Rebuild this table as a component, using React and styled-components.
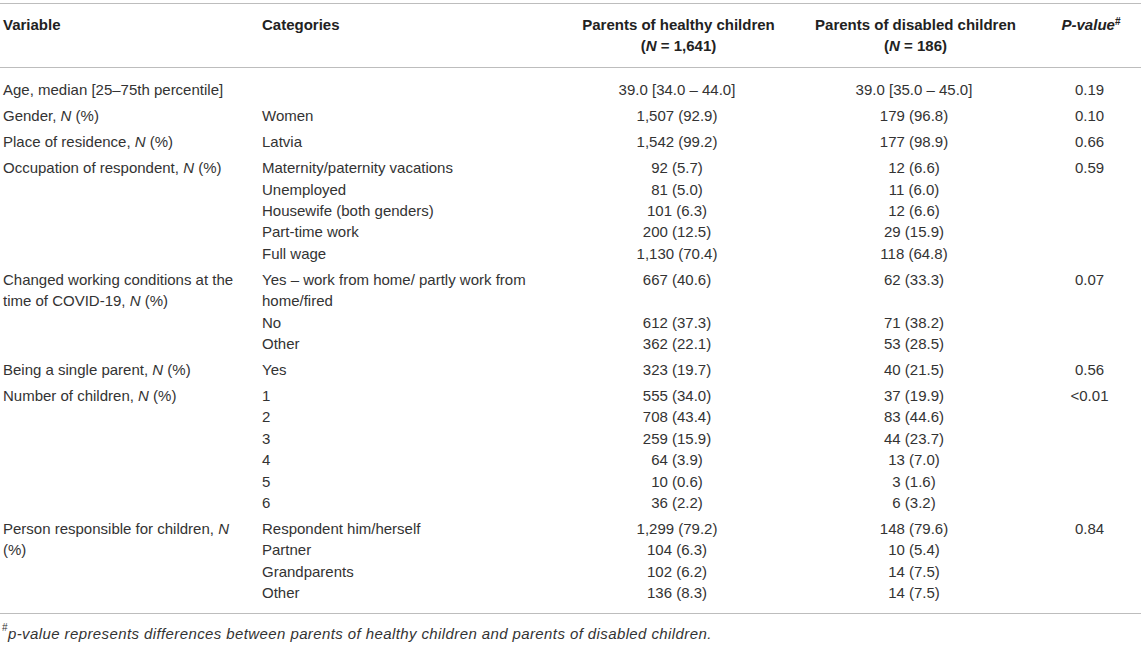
import React from 'react';
import styled, { createGlobalStyle } from 'styled-components';

const GlobalStyle = createGlobalStyle`
    body {
        margin: 0;
        background: #FFFFFF;
        font-family: 'Liberation Sans', Arial, Helvetica, sans-serif;
        color: #333333;
    }
`;

const Page = styled.div`
    width: 1141px;
    padding-top: 3px;
`;

const Table = styled.table`
    width: 1141px;
    border-collapse: collapse;
    table-layout: fixed;
    font-size: 15px;
    line-height: 21.4px;
`;

const Col = styled.col`
    width: ${p => p.$w}px;
`;

const HeadRow = styled.tr`
    border-top: 1px solid #BDBDBD;
    border-bottom: 1px solid #BDBDBD;
`;

const HeadCell = styled.th`
    font-weight: 700;
    color: #222222;
    text-align: ${p => (p.$center ? 'center' : 'left')};
    vertical-align: top;
    padding: 10px ${p => (p.$center ? '0' : '3px')} 10px 3px;
`;

const Cell = styled.td`
    text-align: ${p => (p.$center ? 'center' : 'left')};
    vertical-align: top;
    padding-left: ${p => (p.$center ? '0' : '3px')};
    padding-right: ${p => (p.$center ? '0' : '10px')};
    padding-top: ${p => p.$top}px;
    padding-bottom: ${p => p.$bottom}px;
`;

const BodyEnd = styled.tr`
    border-bottom: 1px solid #BDBDBD;
`;

const Sup = styled.sup`
    font-size: 10px;
    font-style: normal;
    vertical-align: top;
    position: relative;
    top: -3px;
`;

const Footnote = styled.p`
    margin: 0;
    padding: 11px 0 0 2px;
    font-size: 15px;
    letter-spacing: 0.4px;
    font-style: italic;
    color: #333333;
`;

const groups = [
    { v: <>Age, median [25–75th percentile]</>, p: '0.19', rows: [['', '39.0 [34.0 – 44.0]', '39.0 [35.0 – 45.0]']] },
    { v: <>Gender, <i>N</i> (%)</>, p: '0.10', rows: [['Women', '1,507 (92.9)', '179 (96.8)']] },
    { v: <>Place of residence, <i>N</i> (%)</>, p: '0.66', rows: [['Latvia', '1,542 (99.2)', '177 (98.9)']] },
    {
        v: <>Occupation of respondent, <i>N</i> (%)</>, p: '0.59', rows: [
            ['Maternity/paternity vacations', '92 (5.7)', '12 (6.6)'],
            ['Unemployed', '81 (5.0)', '11 (6.0)'],
            ['Housewife (both genders)', '101 (6.3)', '12 (6.6)'],
            ['Part-time work', '200 (12.5)', '29 (15.9)'],
            ['Full wage', '1,130 (70.4)', '118 (64.8)'],
        ]
    },
    {
        v: <>Changed working conditions at the time of COVID-19, <i>N</i> (%)</>, p: '0.07', rows: [
            ['Yes – work from home/ partly work from home/fired', '667 (40.6)', '62 (33.3)'],
            ['No', '612 (37.3)', '71 (38.2)'],
            ['Other', '362 (22.1)', '53 (28.5)'],
        ]
    },
    { v: <>Being a single parent, <i>N</i> (%)</>, p: '0.56', rows: [['Yes', '323 (19.7)', '40 (21.5)']] },
    {
        v: <>Number of children, <i>N</i> (%)</>, p: '<0.01', rows: [
            ['1', '555 (34.0)', '37 (19.9)'],
            ['2', '708 (43.4)', '83 (44.6)'],
            ['3', '259 (15.9)', '44 (23.7)'],
            ['4', '64 (3.9)', '13 (7.0)'],
            ['5', '10 (0.6)', '3 (1.6)'],
            ['6', '36 (2.2)', '6 (3.2)'],
        ]
    },
    {
        v: <>Person responsible for children, <i>N</i> (%)</>, p: '0.84', rows: [
            ['Respondent him/herself', '1,299 (79.2)', '148 (79.6)'],
            ['Partner', '104 (6.3)', '10 (5.4)'],
            ['Grandparents', '102 (6.2)', '14 (7.5)'],
            ['Other', '136 (8.3)', '14 (7.5)'],
        ]
    },
];

const GAP = 2.3;

function GroupRows({ group, first, last }) {
    const n = group.rows.length;
    const startPad = GAP + (first ? 9 : 0);
    const endPad = GAP + (last ? 7 : 0);
    return group.rows.map((r, i) => {
        const top = i === 0 ? startPad : 0;
        const bottom = i === n - 1 ? endPad : 0;
        const RowTag = last && i === n - 1 ? BodyEnd : 'tr';
        return (
            <RowTag key={i}>
                {i === 0 && <Cell rowSpan={n} $top={startPad} $bottom={endPad}>{group.v}</Cell>}
                <Cell $top={top} $bottom={bottom}>{r[0]}</Cell>
                <Cell $center $top={top} $bottom={bottom}>{r[1]}</Cell>
                <Cell $center $top={top} $bottom={bottom}>{r[2]}</Cell>
                {i === 0 && <Cell $center rowSpan={n} $top={startPad} $bottom={endPad}>{group.p}</Cell>}
            </RowTag>
        );
    });
}

export default function App() {
    return (
        <Page>
            <GlobalStyle />
            <Table>
                <colgroup>
                    <Col $w={259} />
                    <Col $w={305} />
                    <Col $w={226} />
                    <Col $w={248} />
                    <Col $w={103} />
                </colgroup>
                <thead>
                    <HeadRow>
                        <HeadCell>Variable</HeadCell>
                        <HeadCell>Categories</HeadCell>
                        <HeadCell $center>Parents of healthy children<br />(<i>N</i> = 1,641)</HeadCell>
                        <HeadCell $center>Parents of disabled children<br />(<i>N</i> = 186)</HeadCell>
                        <HeadCell $center><i>P-value</i><Sup>#</Sup></HeadCell>
                    </HeadRow>
                </thead>
                <tbody>
                    {groups.map((g, i) => (
                        <GroupRows key={i} group={g} first={i === 0} last={i === groups.length - 1} />
                    ))}
                </tbody>
            </Table>
            <Footnote><Sup>#</Sup>p-value represents differences between parents of healthy children and parents of disabled children.</Footnote>
        </Page>
    );
}
